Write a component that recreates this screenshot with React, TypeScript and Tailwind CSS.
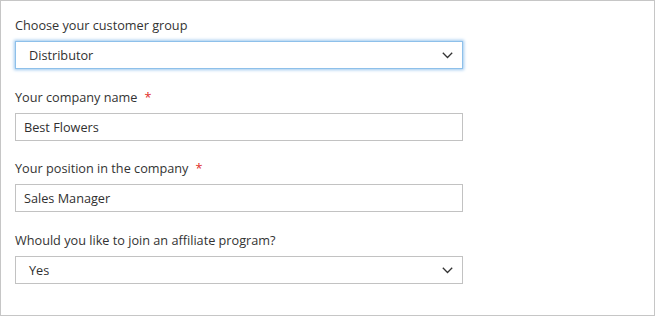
import React from "react";

function Chevron() {
  return (
    <svg width="11" height="7" viewBox="0 0 11 7" className="shrink-0">
      <polyline points="0.8,0.8 5.5,5.5 10.2,0.8" fill="none" stroke="#333" strokeWidth="1.3" />
    </svg>
  );
}

function Label({ text, required }: { text: string; required?: boolean }) {
  return (
    <div className="h-[18px] leading-[18px] text-[12.7px] text-[#333] flex items-center whitespace-nowrap">
      <span>{text}</span>
      {required && <span className="ml-[7px] text-[#e02b27]">*</span>}
    </div>
  );
}

function SelectBox({ value, focused }: { value: string; focused?: boolean }) {
  return (
    <div
      className={
        "mt-[7px] w-[448px] h-[28px] flex items-center justify-between pl-[13px] pr-[9px] bg-white text-[12.7px] text-[#303030] border " +
        (focused
          ? "border-[#8ec0ea] shadow-[0_0_3px_1px_#9ec8ee]"
          : "border-[#c2c2c2]")
      }
    >
      <span className="pt-[2px]">{value}</span>
      <Chevron />
    </div>
  );
}

function InputBox({ value }: { value: string }) {
  return (
    <div className="mt-[7px] w-[448px] h-[28px] flex items-center pl-[8px] bg-white text-[12.7px] text-[#303030] border border-[#c2c2c2]">
      <span className="pt-[1px]">{value}</span>
    </div>
  );
}

export default function App() {
  return (
    <div
      className="w-[655px] h-[316px] bg-white border border-[#c6c6c6] pt-[15px] pl-[14px] flex flex-col"
      style={{ fontFamily: '"Open Sans", "Noto Sans", sans-serif' }}
    >
      <div>
        <Label text="Choose your customer group" />
        <SelectBox value="Distributor" focused />
      </div>
      <div className="mt-[19px]">
        <Label text="Your company name" required />
        <InputBox value="Best Flowers" />
      </div>
      <div className="mt-[18px]">
        <Label text="Your position in the company" required />
        <InputBox value="Sales Manager" />
      </div>
      <div className="mt-[19px]">
        <Label text="Whould you like to join an affiliate program?" />
        <SelectBox value="Yes" />
      </div>
    </div>
  );
}
